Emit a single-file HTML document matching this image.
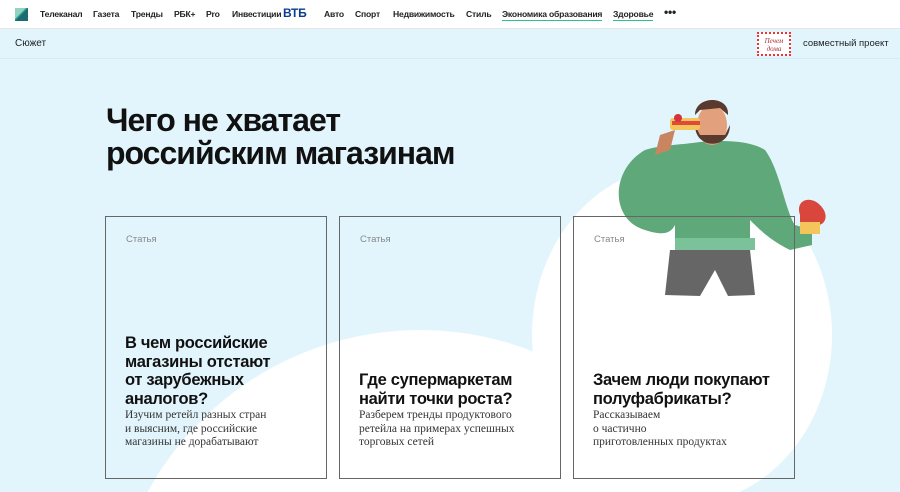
<!DOCTYPE html>
<html style="width:900px;height:492px;overflow:hidden"><head><meta charset="utf-8"><style>
*{margin:0;padding:0;box-sizing:border-box}
body{width:900px;height:492px;overflow:hidden;font-family:"Liberation Sans",sans-serif;background:#e2f5fd;position:relative}
.clip{position:absolute;left:0;top:0;width:900px;height:492px;overflow:hidden}
.top{position:absolute;left:0;top:0;width:900px;height:29px;background:#fff;border-bottom:1px solid #e6e6e6;font-size:8.6px;font-weight:bold;color:#222;letter-spacing:-0.2px;z-index:2}
.top span{position:absolute;top:9px;white-space:nowrap}
.ul{border-bottom:1.5px solid #2fbf8f;padding-bottom:1px}
.sub{position:absolute;top:29px;left:0;width:900px;height:30px;border-bottom:1px solid #d6ecf4;font-size:10px;color:#222}
.blob{position:absolute;background:#fff;border-radius:50%}
h1{position:absolute;left:106px;top:104px;font-size:32px;line-height:33px;font-weight:bold;color:#111;letter-spacing:-1px}
.card{position:absolute;top:216px;width:222px;height:263px;border:1px solid #666}
.lab{position:absolute;left:20px;top:17px;font-size:9.5px;color:#888}
.t{position:absolute;left:19px;font-size:16.5px;line-height:18.5px;font-weight:bold;color:#111;letter-spacing:-0.3px}
.d{position:absolute;left:19px;font-family:"Liberation Serif",serif;font-size:11.5px;line-height:13.5px;color:#333}
</style></head><body>
<div class="clip">
<div class="blob" style="left:110px;top:330px;width:620px;height:620px"></div>
<div class="blob" style="left:532px;top:165px;width:300px;height:340px"></div>
<div class="top">
<svg style="position:absolute;left:15px;top:8px" width="13" height="13"><rect width="13" height="13" fill="#2a9d8f"/><polygon points="0,13 13,0 13,13" fill="#1d6b72"/><polygon points="0,0 11,0 0,11" fill="#8fd3c0"/></svg>
<span style="left:40px">Телеканал</span><span style="left:93px">Газета</span><span style="left:131px">Тренды</span><span style="left:174px">РБК+</span><span style="left:206px">Pro</span><span style="left:232px">Инвестиции</span>
<span style="left:283px;top:6px;font-size:12px;color:#0a3d8f">ВТБ</span>
<span style="left:324px">Авто</span><span style="left:355px">Спорт</span><span style="left:393px">Недвижимость</span><span style="left:466px">Стиль</span>
<span style="left:502px" class="ul">Экономика образования</span><span style="left:613px" class="ul">Здоровье</span><span style="left:664px;top:5px;font-size:12px">•••</span>
</div>
<div class="sub"><span style="position:absolute;left:15px;top:9px">Сюжет</span>
<div style="position:absolute;left:757px;top:3px;width:34px;height:24px;background:#fff;border:2px dotted #e33;font-family:'Liberation Serif',serif;font-style:italic;font-size:7px;color:#a33;text-align:center;line-height:8px;padding-top:3px">Печем<br>дома</div>
<span style="position:absolute;left:803px;top:9px;font-size:9.5px">совместный проект</span></div>
<h1>Чего не хватает<br>российским магазинам</h1>
<svg style="position:absolute;left:600px;top:90px" width="240" height="215">
<path d="M45 140 C10 130 10 80 45 60 C60 55 80 55 100 52 C120 50 150 50 165 60 C180 80 185 120 195 135 L212 140 L212 155 L190 160 C170 150 160 140 150 130 L150 160 L75 160 L75 135 C70 145 60 145 45 140Z" fill="#5fa87a"/>
<rect x="75" y="148" width="80" height="12" fill="#7bc29a"/>
<path d="M70 160 L150 160 L155 205 L128 206 L115 180 L100 206 L65 205Z" fill="#666"/>
<ellipse cx="112" cy="35" rx="15" ry="20" fill="#e3a07d"/>
<path d="M95 35 C95 60 130 60 130 35 L125 45 L100 45Z" fill="#5a3a2e"/>
<path d="M95 25 C95 5 130 5 128 25 L120 18 L100 20Z" fill="#5a3a2e"/>
<rect x="70" y="28" width="30" height="12" rx="3" fill="#f4c55b"/><rect x="72" y="31" width="28" height="4" fill="#e04a3a"/>
<circle cx="78" cy="28" r="4" fill="#d3333a"/>
<path d="M60 45 L75 40 L70 60 L55 65Z" fill="#c9855f"/>
<path d="M200 125 C195 110 210 105 220 115 C230 125 225 135 218 135 L200 135Z" fill="#d9463c"/>
<rect x="200" y="132" width="20" height="12" fill="#f4c55b"/>
</svg>
<div class="card" style="left:105px"><div class="lab">Статья</div><div class="t" style="top:117px">В чем российские<br>магазины отстают<br>от зарубежных<br>аналогов?</div><div class="d" style="top:192px">Изучим ретейл разных стран<br>и выясним, где российские<br>магазины не дорабатывают</div></div>
<div class="card" style="left:339px"><div class="lab">Статья</div><div class="t" style="top:154px">Где супермаркетам<br>найти точки роста?</div><div class="d" style="top:192px">Разберем тренды продуктового<br>ретейла на примерах успешных<br>торговых сетей</div></div>
<div class="card" style="left:573px"><div class="lab">Статья</div><div class="t" style="top:154px">Зачем люди покупают<br>полуфабрикаты?</div><div class="d" style="top:192px">Рассказываем<br>о частично<br>приготовленных продуктах</div></div>
</div>
</body></html>
